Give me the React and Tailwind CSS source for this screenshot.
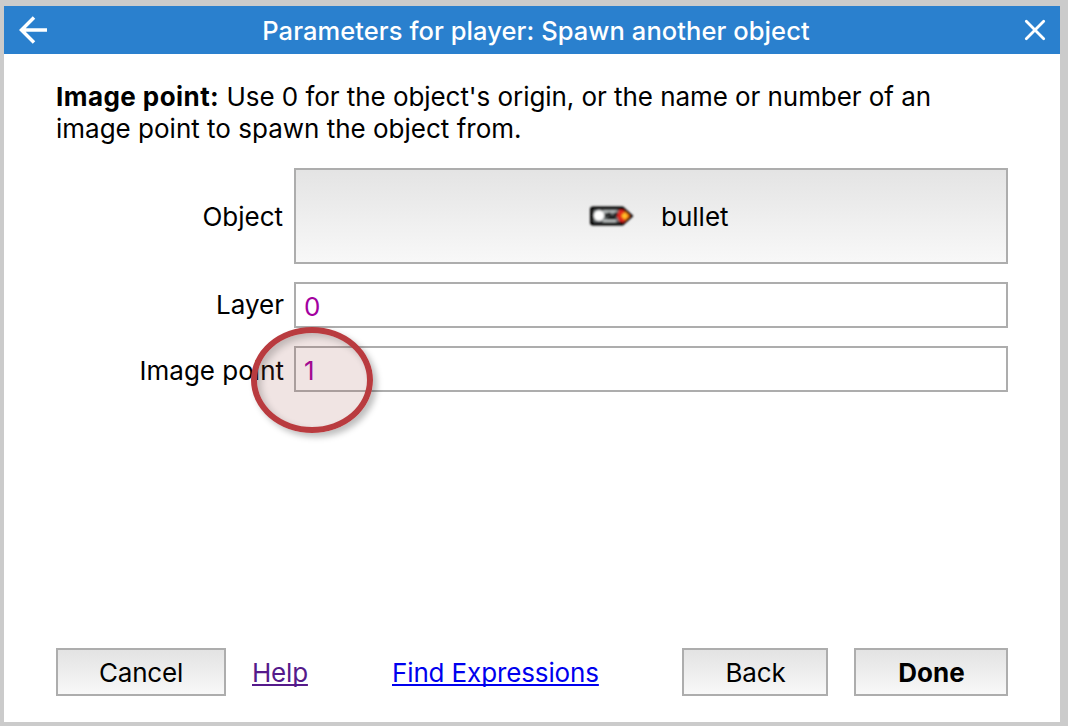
import React from "react";

const buttonBase =
  "h-12 shrink-0 border-2 border-[#adadad] bg-linear-to-b from-[#e3e3e3] to-[#f8f8f8] pt-0.5 flex items-center justify-center";

function BulletSprite() {
  return (
    <svg className="h-6 w-[48px] shrink-0" viewBox="0 0 48 24" aria-hidden="true">
      <defs>
        <filter id="soft" x="-10%" y="-10%" width="120%" height="120%">
          <feGaussianBlur stdDeviation="0.9" />
        </filter>
      </defs>
      <g filter="url(#soft)">
        <path d="M5 2.500H36L46.500 12L36 21.500H5L3 20V4Z" fill="#050505" />
        <rect x="6.500" y="6" width="26" height="12" fill="#6c7173" />
        <circle cx="12" cy="11.500" r="5.200" fill="#fff" />
        <path d="M16 7.500H30M16 17H29" stroke="#c8cccc" strokeWidth="2" />
        <path d="M18 12.500L22 9.500L25 14L29 9.500L31 13M20 14H29" fill="none" stroke="#1a1a1a" strokeWidth="2.600" />
        <path d="M32 6H36L43 12L36 18.500L32 17L30 12Z" fill="#e3251b" />
        <path d="M38 7.500L42.500 12L38 16.500L34 12Z" fill="#ff8a16" />
        <circle cx="37.500" cy="12" r="2.400" fill="#ffc42a" />
      </g>
    </svg>
  );
}

function Field({ label, value, labelClass }) {
  return (
    <div className="flex h-[46px] items-stretch gap-2.5">
      <div className="flex w-[228px] items-center justify-end">
        <span className={labelClass}>{label}</span>
      </div>
      <div className="flex w-[714px] items-center border-2 border-[#adadad] bg-white px-2 pt-[3px] text-[#a3009f]">
        <span>{value}</span>
      </div>
    </div>
  );
}

export default function App() {
  return (
    <div className="relative flex h-[726px] w-[1068px] flex-col overflow-hidden bg-[#cbcbcb] pt-1.5 pr-2 pb-1 pl-1 font-['Inter','Liberation_Sans',sans-serif] text-[26px] leading-8 whitespace-nowrap text-black">
      <header className="flex h-12 shrink-0 items-center justify-between bg-[#2a80ce] pr-[14px] pl-[14px] text-white">
        <svg className="h-8 w-8 shrink-0" viewBox="0 0 32 32" fill="none" stroke="currentColor" strokeWidth="3.500">
          <path d="M29 16H3M16 3.500L3.500 16L16 28.500" />
        </svg>
        <h1 className="pt-0.5 pr-[2px] text-[25.500px] font-medium tracking-[0.070px]">Parameters for player: Spawn another object</h1>
        <svg className="h-[22px] w-[22px] shrink-0" viewBox="0 0 22 22" fill="none" stroke="currentColor" strokeWidth="2.800" strokeLinecap="round">
          <path d="M2.300 2.300L19.700 19.700M19.700 2.300L2.300 19.700" />
        </svg>
      </header>

      <main className="flex flex-1 flex-col bg-white px-[52px] pt-[27px] pb-[26px]">
        <p className="h-16">
          <span className="block"><b className="font-bold tracking-[0.440px]">Image point:</b> <span className="tracking-[-0.060px]">Use 0 for the object's origin, or the name or number of an</span></span>
          <span className="block">image point to spawn the object from.</span>
        </p>

        <div className="mt-[23px] flex flex-col gap-[18px]">
          <div className="flex h-24 gap-2.5">
            <div className="flex w-[227px] items-center justify-end pt-0.5"><span>Object</span></div>
            <button className="ml-px flex w-[714px] items-center border-2 border-[#adadad] bg-linear-to-b from-[#e4e4e4] to-[#f8f8f8] pl-[291px]">
              <BulletSprite />
              <span className="ml-[26px] pt-0.5">bullet</span>
            </button>
          </div>
          <Field label="Layer" value="0" labelClass="" />
          <Field label="Image point" value="1" labelClass="pt-1" />
        </div>

        <footer className="mt-auto flex items-center">
          <button className={`${buttonBase} w-[170px] tracking-[-0.200px]`}>Cancel</button>
          <a className="ml-[26px] w-[56px] pt-0.5 tracking-[-0.200px] text-[#551a8b] underline decoration-2 underline-offset-2 [text-decoration-skip-ink:none]"><span>Help</span></a>
          <a className="ml-[84px] pt-0.5 tracking-[-0.130px] text-[#0000ee] underline decoration-2 underline-offset-2 [text-decoration-skip-ink:none]"><span>Find Expressions</span></a>
          <button className={`${buttonBase} ml-auto w-[146px] pl-px tracking-[-0.200px]`}>Back</button>
          <button className={`${buttonBase} ml-[26px] w-[154px] pl-px font-bold`}>Done</button>
        </footer>
      </main>

      <div className="pointer-events-none absolute top-[327px] left-[251px] h-[106px] w-[122px] rounded-[50%] border-6 border-[#b93b3f] bg-[#9c4b44]/15 shadow-[4px_4px_6px_rgba(0,0,0,0.26),inset_4px_4px_7px_rgba(0,0,0,0.2)]" />
    </div>
  );
}
